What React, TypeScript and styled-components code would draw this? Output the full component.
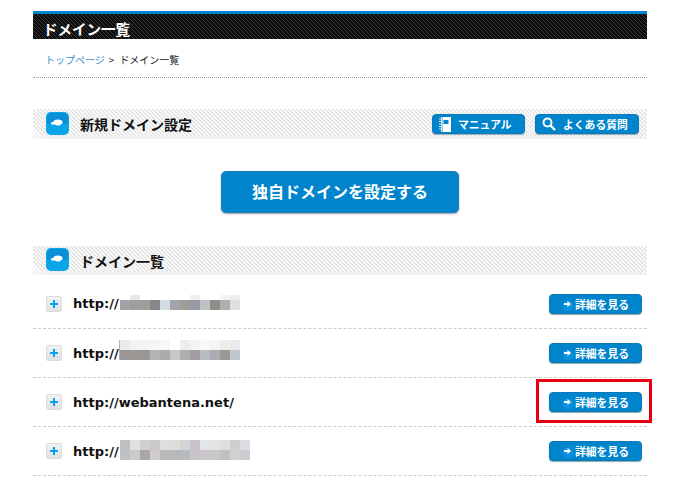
import React from "react";
import styled, { createGlobalStyle } from "styled-components";

const Global = createGlobalStyle`
  html, body { margin: 0; padding: 0; background: #fff; height: 477px; overflow: hidden; }
  body { font-family: "Noto Sans CJK JP", "Liberation Sans", sans-serif; color: #111; }
`;

const Page = styled.div`
  width: 614px;
  margin-left: 33px;
  padding-top: 11px;
`;

const TitleBar = styled.h1`
  margin: 0;
  height: 25px;
  border-top: 3px solid #0085cc;
  background-color: #111;
  background-image: repeating-linear-gradient(45deg, #3a3a3a 0 1px, #0c0c0c 1px 2.83px);
  color: #fff;
  font-size: 14.5px;
  font-weight: 700;
  line-height: 29px;
  padding-left: 10px;
  overflow: hidden;
`;

const Breadcrumb = styled.div`
  height: 38px;
  border-bottom: 1px dotted #999;
  padding-left: 12px;
  font-size: 10px;
  line-height: 42px;
  color: #222;
`;

const Crumb = styled.span`
  color: #3b8fd0;
`;

const Sep = styled.span`
  margin: 0 5px 0 4px;
`;

const SectionHead = styled.div<{ $top: number; $h: number }>`
  display: flex;
  align-items: center;
  height: ${(p) => p.$h}px;
  margin-top: ${(p) => p.$top}px;
  padding: 0 8px 0 13px;
  background-color: #fbfbfb;
  background-image: repeating-linear-gradient(45deg, #e6e6e6 0 1.41px, #fbfbfb 1.41px 2.83px);
`;

const HeadIcon = styled.svg`
  width: 23px;
  height: 23px;
  flex: none;
  margin-top: -2px;
`;

const HeadTitle = styled.h2`
  margin: 0 0 0 11px;
  font-size: 14px;
  font-weight: 700;
  line-height: 30px;
  color: #111;
  flex: 1;
`;

const HeadButton = styled.a<{ $w: number }>`
  display: flex;
  align-items: center;
  gap: 7px;
  width: ${(p) => p.$w}px;
  height: 20px;
  box-sizing: border-box;
  margin-left: 10px;
  padding-left: 6px;
  border-radius: 4px;
  background: #0085cc;
  border: 1px solid #0d78b8;
  box-shadow: 0 1px 1px #9ab;
  color: #fff;
  font-size: 10.8px;
  font-weight: 700;
  white-space: nowrap;
`;

const BigRow = styled.div`
  display: flex;
  justify-content: center;
  padding-top: 32px;
  margin-bottom: 33px;
`;

const BigButton = styled.a`
  display: block;
  width: 238px;
  height: 42px;
  box-sizing: border-box;
  border-radius: 5px;
  background: #0085cc;
  border: 1px solid #1a7fbb;
  box-shadow: 0 1px 2px #99a;
  color: #fff;
  font-size: 16px;
  font-weight: 700;
  line-height: 39px;
  text-align: center;
`;

const Row = styled.div<{ $first?: boolean }>`
  display: flex;
  align-items: center;
  height: ${(p) => (p.$first ? 53 : 48)}px;
  padding: ${(p) => (p.$first ? "4px" : "0")} 5px 0 13px;
  box-sizing: content-box;
  height: ${(p) => (p.$first ? 49 : 48)}px;
  border-bottom: 1px dashed #ccc;
`;

const Plus = styled.span`
  display: flex;
  align-items: center;
  justify-content: center;
  width: 16px;
  height: 16px;
  box-sizing: border-box;
  flex: none;
  border-radius: 2px;
  background: linear-gradient(#f2f2f2, #e0e2e4);
  border: 1px solid #dcdcdc;
  color: #0aa0f0;
`;

const Url = styled.span`
  margin-left: 11px;
  font-family: "DejaVu Sans", "Liberation Sans", sans-serif;
  font-size: 13px;
  font-weight: 700;
  color: #111;
  white-space: nowrap;
  width: 47px;
`;

const UrlFull = styled(Url)`
  width: auto;
`;

const Mosaic = styled.div<{ $cols: number; $top: number; $up: number; $edge?: boolean }>`
  display: grid;
  grid-template-columns: repeat(${(p) => p.$cols}, 10px);
  grid-template-rows: ${(p) => p.$top}px 10px;
  transform: translateY(${(p) => p.$up}px);
  box-shadow: ${(p) => (p.$edge ? "-1px 0 0 #a9b6c8" : "none")};
`;

const Cell = styled.i<{ $c: string }>`
  display: block;
  background: ${(p) => p.$c};
`;

const Spacer = styled.div`
  flex: 1;
`;

const DetailButton = styled.a`
  display: flex;
  align-items: center;
  gap: 1px;
  width: 93px;
  height: 20px;
  box-sizing: border-box;
  padding-left: 8px;
  border-radius: 4px;
  background: #0085cc;
  border: 1px solid #0d78b8;
  box-shadow: 0 1px 1px #8aa;
  color: #fff;
  font-size: 10.8px;
  font-weight: 700;
  white-space: nowrap;
`;

const Highlight = styled.span`
  display: flex;
  padding: 13px 10px 11px 13px;
  margin: -13px -10px -11px -13px;
  outline: 3px solid #e60012;
  outline-offset: -3px;
`;

const CloudIcon = () => (
  <HeadIcon viewBox="0 0 23 23">
    <rect x="0" y="0" width="23" height="23" rx="5" fill="#0aa4e8" />
    <path d="M1 12V6a5 5 0 0 1 5-5h11a5 5 0 0 1 5 5v6z" fill="#0a90d8" />
    <path d="M5 11.5c0-1.2 1.1-1.6 2.2-1.5.8-2 3-2.6 5-2.4 2.2.1 4.4.8 4.4 2.6 0 1.5-1 2.2-2.2 2.2-.6 1.2-2 1.5-2.8.9-1.2.3-2.2-.3-2.8-.8-1.5.3-3.8.2-3.8-1z" fill="#fff" />
  </HeadIcon>
);

const BookIcon = () => (
  <svg width="12" height="15" viewBox="0 0 12 15">
    <rect x="2" y="0" width="10" height="15" fill="#fff" />
    <rect x="4.5" y="3" width="5" height="4" fill="#0085cc" />
    <path d="M0 2h3M0 4.5h3M0 7h3M0 9.5h3M0 12h3" stroke="#d5edf9" strokeWidth="1" />
    <path d="M3.2 0v15" stroke="#0085cc" strokeWidth=".6" />
  </svg>
);

const SearchIcon = () => (
  <svg width="14" height="14" viewBox="0 0 14 14">
    <circle cx="5.5" cy="5.5" r="4" fill="none" stroke="#fff" strokeWidth="2" />
    <path d="M8.5 8.5L13 13" stroke="#fff" strokeWidth="2.4" />
  </svg>
);

const PlusIcon = () => (
  <svg width="8" height="8" viewBox="0 0 8 8">
    <path d="M4 0v8M0 4h8" stroke="currentColor" strokeWidth="2" />
  </svg>
);

const ArrowIcon = () => (
  <svg width="16" height="14" viewBox="0 0 16 14">
    <circle cx="10" cy="9" r="5.5" fill="#0a92de" />
    <path d="M6 6h3.5V4L13 7 9.5 10V8H6z" fill="#fff" />
  </svg>
);

const mosaics = [
  {
    cols: 12,
    top: 5,
    up: -1,
    edge: false,
    cells: [
      "#fff", "#e8e8e8", "#fff", "#fff", "#fff", "#fff", "#fff", "#efefef", "#fff", "#fff", "#f3f3f3", "#eeeeee",
      "#a3a2a6", "#a09da1", "#a19e9a", "#87878b", "#d3dce4", "#a3a2a8", "#a09c98", "#959aa4", "#bfc0c2", "#8e8d88", "#b0afaf", "#dfe0e4",
    ],
  },
  {
    cols: 12,
    top: 10,
    up: -3,
    edge: true,
    cells: [
      "#ebebeb", "#f3f3f3", "#f4f4f4", "#f5f5f5", "#f7f8f8", "#fff", "#ecedef", "#f3f3f3", "#f8f9f9", "#f4f4f4", "#eeedeb", "#e9eaec",
      "#999796", "#9a9896", "#9a9794", "#b5b4b5", "#ababaf", "#c8c7c6", "#afafb0", "#a19da3", "#b7bcc2", "#aeacb0", "#9a9996", "#c0c5cf",
    ],
  },
  {
    cols: 13,
    top: 10,
    up: -1,
    edge: false,
    cells: [
      "#bcc0c3", "#e2e1df", "#cfd0d3", "#cdc8c8", "#dddfdf", "#dedbd8", "#d3d4d6", "#c8c3ca", "#e3e5e7", "#e4e4e2", "#dfdfdc", "#cfcdcd", "#dcdde2",
      "#bfc2c4", "#cccacb", "#aaa6a7", "#cfcacb", "#b9b9b9", "#b9b8b8", "#b5bcbf", "#c8c4ca", "#c9c7c8", "#cbc6c9", "#c0c0c2", "#d0d0cc", "#cccad0",
    ],
  },
];

const Blur = ({ m }: { m: (typeof mosaics)[number] }) => (
  <Mosaic $cols={m.cols} $top={m.top} $up={m.up} $edge={m.edge}>
    {m.cells.map((c, i) => (
      <Cell key={i} $c={c} />
    ))}
  </Mosaic>
);

const Detail = () => (
  <DetailButton>
    <ArrowIcon />
    詳細を見る
  </DetailButton>
);

export default function App() {
  return (
    <>
      <Global />
      <Page>
        <TitleBar>ドメイン一覧</TitleBar>
        <Breadcrumb>
          <Crumb>トップページ</Crumb>
          <Sep>&gt;</Sep>
          ドメイン一覧
        </Breadcrumb>
        <SectionHead $top={31} $h={30}>
          <CloudIcon />
          <HeadTitle>新規ドメイン設定</HeadTitle>
          <HeadButton $w={93}>
            <BookIcon />
            マニュアル
          </HeadButton>
          <HeadButton $w={104}>
            <SearchIcon />
            よくある質問
          </HeadButton>
        </SectionHead>
        <BigRow>
          <BigButton>独自ドメインを設定する</BigButton>
        </BigRow>
        <SectionHead $top={0} $h={29}>
          <CloudIcon />
          <HeadTitle>ドメイン一覧</HeadTitle>
        </SectionHead>
        <Row $first>
          <Plus><PlusIcon /></Plus>
          <Url>http://</Url>
          <Blur m={mosaics[0]} />
          <Spacer />
          <Detail />
        </Row>
        <Row>
          <Plus><PlusIcon /></Plus>
          <Url>http://</Url>
          <Blur m={mosaics[1]} />
          <Spacer />
          <Detail />
        </Row>
        <Row>
          <Plus><PlusIcon /></Plus>
          <UrlFull>http://webantena.net/</UrlFull>
          <Spacer />
          <Highlight>
            <Detail />
          </Highlight>
        </Row>
        <Row>
          <Plus><PlusIcon /></Plus>
          <Url>http://</Url>
          <Blur m={mosaics[2]} />
          <Spacer />
          <Detail />
        </Row>
      </Page>
    </>
  );
}
